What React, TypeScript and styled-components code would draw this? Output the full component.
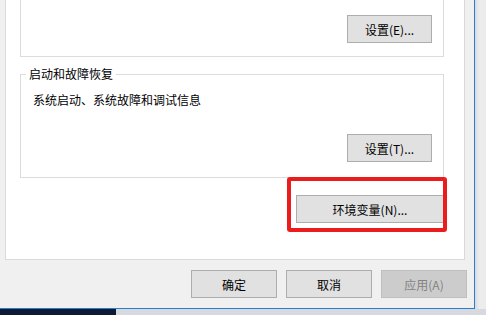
import styled, { createGlobalStyle } from "styled-components";

const GlobalStyle = createGlobalStyle`
html, body {
    margin: 0;
    padding: 0;
    background: #e4e4e4;
}
body {
    font-family: "Noto Sans CJK SC", "Microsoft YaHei", sans-serif;
    font-size: 12px;
    color: #000;
}
`;

export default function App() {
    return (
        <>
            <GlobalStyle />
            <Screen>
                <WindowRow>
                    <Window>
                        <TabPage>
                            <TopGroup>
                                <Button>设置(E)...</Button>
                            </TopGroup>
                            <Group>
                                <Legend>启动和故障恢复</Legend>
                                <GroupBody>
                                    <Description>系统启动、系统故障和调试信息</Description>
                                    <Button>设置(T)...</Button>
                                </GroupBody>
                            </Group>
                            <EnvRow>
                                <Marked>
                                    <Button width="148px">环境变量(N)...</Button>
                                    <Highlight />
                                </Marked>
                            </EnvRow>
                        </TabPage>
                        <DialogButtons>
                            <Button width="86px">确定</Button>
                            <Button width="86px">取消</Button>
                            <Button width="86px" disabled>应用(A)</Button>
                        </DialogButtons>
                    </Window>
                    <Outside />
                </WindowRow>
                <Taskbar>
                    <TaskbarDark />
                </Taskbar>
            </Screen>
        </>
    )
}

const Screen = styled.div`
display: flex;
flex-direction: column;
width: 486px;
height: 315px;
overflow: hidden;
`;

const WindowRow = styled.div`
display: flex;
height: 309px;
`;

const Window = styled.div`
display: flex;
flex-direction: column;
width: 469px;
height: 308px;
background: #f0f0f0;
border-right: 1px solid #2b7bd2;
border-bottom: 1px solid #2b7bd2;
padding-left: 5px;
`;

const Outside = styled.div`
flex: 1;
background: linear-gradient(to right, #d9d9d9, #ececec 4px);
`;

const TabPage = styled.div`
display: flex;
flex-direction: column;
width: 460px;
height: 260px;
background: #fff;
border: 1px solid #d9d9d9;
border-top: none;
padding-left: 14px;
box-sizing: border-box;
`;

const TopGroup = styled.div`
display: flex;
justify-content: flex-end;
align-items: flex-end;
width: 424px;
height: 57px;
border: 1px solid #dcdcdc;
border-top: none;
padding: 0 11px 13px 0;
box-sizing: border-box;
`;

const Group = styled.fieldset`
width: 424px;
height: 112px;
margin: 9px 0 0;
padding: 0;
border: 1px solid #dcdcdc;
box-sizing: border-box;
min-inline-size: 0;
`;

const Legend = styled.legend`
margin-left: 5px;
padding: 0 3px;
line-height: 16px;
font-size: 12px;
`;

const GroupBody = styled.div`
display: flex;
flex-direction: column;
align-items: flex-end;
height: 94px;
padding: 0 11px 14px 12px;
box-sizing: border-box;
`;

const Description = styled.div`
align-self: flex-start;
margin: 10px 0 0;
line-height: 16px;
flex: 1;
`;

const EnvRow = styled.div`
display: flex;
justify-content: flex-end;
width: 424px;
margin-top: 17px;
`;

const Marked = styled.div`
position: relative;
display: flex;
`;

const Highlight = styled.div`
position: absolute;
left: -9px;
right: -3px;
top: -18px;
bottom: -9px;
border: 4px solid #ea1c1c;
border-radius: 3px;
pointer-events: none;
`;

const Button = styled.button<{ width?: string }>`
display: flex;
align-items: center;
justify-content: center;
width: ${p => p.width || "85px"};
height: 28px;
padding: 0;
background: #e1e1e1;
border: 1px solid #adadad;
border-radius: 0;
font-family: "Noto Sans CJK SC", "Microsoft YaHei", sans-serif;
font-size: 12px;
color: #000;
box-sizing: border-box;
&:disabled {
    background: #cccccc;
    border-color: #bfbfbf;
    color: #838383;
}
`;

const DialogButtons = styled.div`
display: flex;
justify-content: flex-end;
gap: 9px;
width: 462px;
margin-top: 10px;
`;

const Taskbar = styled.div`
display: flex;
flex: 1;
background: #d6d9dd;
`;

const TaskbarDark = styled.div`
width: 116px;
background: #0c1a33;
`;
